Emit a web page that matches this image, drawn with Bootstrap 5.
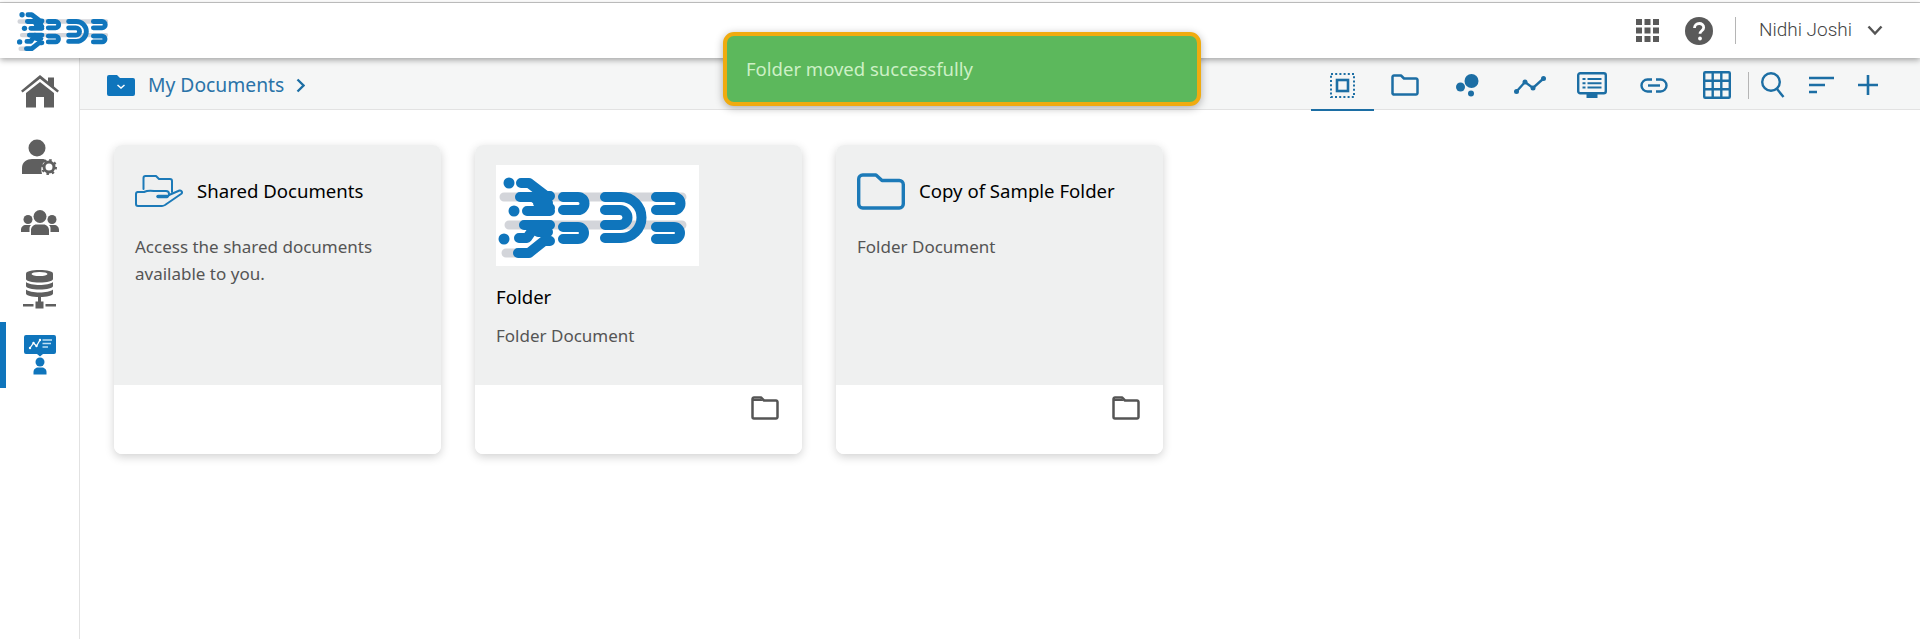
<!DOCTYPE html>
<html lang="en">
<head>
  <meta charset="UTF-8">
  <meta name="viewport" content="width=device-width, initial-scale=1.0">
  <title>My Documents</title>
  <link href="https://cdn.jsdelivr.net/npm/bootstrap@5.3.3/dist/css/bootstrap.min.css" rel="stylesheet">
  <style>
    body {
      font-family: "Noto Sans", "Lato", sans-serif;
      color: #555;
      background: #fff;
      overflow: hidden;
    }
    .top-line {
      height: 1px;
      margin-top: 2px;
      background: #c9c9c9;
    }
    .top-bar {
      height: 55px;
      padding: 0 37px 0 15px;
      background: #fff;
      box-shadow: 0 2px 6px rgba(0, 0, 0, .35);
      position: relative;
      z-index: 2;
    }
    .help-icon { margin-left: 26px; }
    .sep-v {
      width: 1px;
      height: 27px;
      background: #b5b5b5;
      margin: 0 23px 0 22px;
    }
    .user-name {
      font-family: "Roboto", sans-serif;
      font-weight: 300;
      font-size: 19px;
      color: #444;
    }
    .user-caret { margin-left: 15px; }
    .page-body { height: 581px; }
    .side-nav {
      width: 80px;
      border-right: 1px solid #e2e2e2;
      flex-shrink: 0;
    }
    .side-item {
      height: 66px;
      display: flex;
      align-items: center;
      justify-content: center;
      position: relative;
    }
    .side-item.is-active::before {
      content: "";
      position: absolute;
      left: 0;
      top: 0;
      bottom: 0;
      width: 6px;
      background: #0f75bc;
    }
    .crumb-bar {
      height: 52px;
      background: #f5f6f6;
      border-bottom: 1px solid #e2e2e2;
      padding: 3px 42px 0 27px;
    }
    .crumb-text {
      font-size: 19.300px;
      color: #2a73a8;
      margin: 0 12px 0 13px;
    }
    .tool-btn {
      width: 62.4px;
      height: 48px;
      display: flex;
      align-items: center;
      justify-content: center;
      position: relative;
    }
    .tool-btn.is-active::after {
      content: "";
      position: absolute;
      left: 0;
      right: 0;
      bottom: -2px;
      height: 2px;
      background: #1c6ea4;
    }
    .tool-sep {
      width: 1px;
      height: 27px;
      background: #b5b5b5;
      margin-right: 12px;
    }
    .tool-end { margin-left: 24px; }
    .cards-row {
      padding: 35px 0 0 34px;
      gap: 34px;
    }
    .doc-card {
      width: 327px;
      height: 309px;
      border: 0;
      border-radius: 8px;
      box-shadow: 0 3px 10px rgba(0, 0, 0, .18);
      overflow: hidden;
    }
    .doc-top {
      height: 240px;
      background: #eff0f0;
      padding: 20px 21px;
    }
    .doc-foot {
      height: 69px;
      background: #fff;
      padding: 11px 23px 0 0;
      display: flex;
      justify-content: flex-end;
      align-items: flex-start;
      color: #555;
    }
    .doc-head {
      height: 52px;
      gap: 14px;
    }
    .doc-title {
      font-size: 18.600px;
      font-weight: 400;
      color: #000;
    }
    .doc-desc {
      font-size: 17px;
      line-height: 27px;
      color: #555;
      margin-top: 16px;
    }
    .logo-box {
      width: 203px;
      height: 101px;
      background: #fff;
      display: block;
    }
    .logo-title { margin-top: 17px; }
    .logo-desc { margin-top: 11px; }
    .toast-box {
      position: absolute;
      left: 723px;
      top: 32px;
      width: 478px;
      height: 74px;
      background: #5cb85c;
      border: 4px solid #f0ab0f;
      border-radius: 11px;
      box-shadow: 0 2px 8px rgba(0, 0, 0, .3);
      color: #cdf0c6;
      font-size: 18.500px;
      padding-left: 19px;
      z-index: 5;
    }
  </style>
</head>
<body>
  <svg width="0" height="0" class="position-absolute">
    <symbol id="bdb-logo" viewBox="0 0 203 101">
      <g fill="none" stroke="#d3d5da" stroke-width="9" stroke-linecap="round">
        <path d="M8 32H186M13 60H186M10 88H30"/>
      </g>
      <g fill="none" stroke="#0f75bc" stroke-width="10" stroke-linecap="round" stroke-linejoin="round">
        <path d="M25 18H33L50 31H54"/>
        <path d="M24 32H37L52 43H54M31 46H54M42 38H52"/>
        <path d="M54 60H28M40 60L31 73H23M42 67H52"/>
        <path d="M22 88H33L48 76H54"/>
        <path d="M67 32H82a6.500 6.500 0 0 1 0 13H67M67 62H82a6 6 0 0 1 0 12H67"/>
        <path d="M109 32H125a20.500 20.500 0 0 1 0 41H109M109 45H124a7.500 7.500 0 0 1 0 15H109"/>
        <path d="M160 32H178a6.500 6.500 0 0 1 0 13H160M160 62H178a6 6 0 0 1 0 12H160"/>
      </g>
      <g fill="#0f75bc">
        <circle cx="13" cy="18" r="5.500"/>
        <circle cx="18" cy="46" r="5.500"/>
        <circle cx="8" cy="74" r="5.500"/>
      </g>
    </symbol>
    <symbol id="folder-line" viewBox="0 0 28 24">
      <path d="M1.500 21V3a1.500 1.500 0 0 1 1.500-1.500H10l3 3H25a1.500 1.500 0 0 1 1.500 1.500V21a1.500 1.500 0 0 1-1.500 1.500H3A1.500 1.500 0 0 1 1.500 21Z" fill="none" stroke="currentColor" stroke-width="2.500" stroke-linejoin="round"/>
      <path d="M1.500 3H10l2 2H1.500Z" fill="currentColor"/>
    </symbol>
  </svg>

  <div class="top-line"></div>
  <nav class="top-bar d-flex align-items-center justify-content-between">
    <svg width="100" height="49"><use href="#bdb-logo"/></svg>
    <div class="d-flex align-items-center">
      <svg width="23" height="23" viewBox="0 0 23 23" fill="#5a5a5a">
        <path d="M0 0h6v6H0zM8.500 0h6v6h-6zM17 0h6v6h-6zM0 8.500h6v6H0zM8.500 8.500h6v6h-6zM17 8.500h6v6h-6zM0 17h6v6H0zM8.500 17h6v6h-6zM17 17h6v6h-6z"/>
      </svg>
      <svg class="help-icon" width="28" height="28" viewBox="0 0 28 28">
        <circle cx="14" cy="14" r="14" fill="#5a5a5a"/>
        <path d="M9.500 11c0-2.800 2-4.500 4.700-4.500 2.600 0 4.500 1.600 4.500 3.900 0 3.300-3.700 3.300-3.700 6.400" fill="none" stroke="#fff" stroke-width="2.800"/>
        <circle cx="15" cy="21.500" r="1.900" fill="#fff"/>
      </svg>
      <span class="sep-v"></span>
      <span class="user-name">Nidhi Joshi</span>
      <svg class="user-caret" width="16" height="11" viewBox="0 0 16 11"><path d="M1.500 1.500 8 8.500l6.500-7" fill="none" stroke="#555" stroke-width="2.500"/></svg>
    </div>
  </nav>

  <div class="d-flex page-body">
    <aside class="side-nav">
      <div class="side-item">
        <svg width="38" height="33" viewBox="0 0 38 33" fill="#5f5f5f">
          <path d="M19 0 27 6.500V2.500h6V11.500l5 4.200-1.600 1.900L19 3.800 1.600 17.600 0 15.700Z"/>
          <path d="M19 7 33 18V32.500H23V22H15V32.500H5V18Z"/>
        </svg>
      </div>
      <div class="side-item">
        <svg width="36" height="36" viewBox="0 0 36 36" fill="#5f5f5f">
          <circle cx="15" cy="9" r="8.500"/>
          <path d="M0 35V29c0-6 5-9 10-9h10c2 0 3.500.5 5 1.500-4 1-7 6-5 13.500Z"/>
          <circle cx="27" cy="28" r="5" fill="none" stroke="#5f5f5f" stroke-width="3"/>
          <circle cx="27" cy="28" r="7" fill="none" stroke="#5f5f5f" stroke-width="2" stroke-dasharray="2.500 3"/>
        </svg>
      </div>
      <div class="side-item">
        <svg width="38" height="26" viewBox="0 0 38 26" fill="#5f5f5f">
          <circle cx="19" cy="6.500" r="6.500"/>
          <circle cx="7" cy="9.500" r="4.500"/>
          <circle cx="31" cy="9.500" r="4.500"/>
          <path d="M0 22v-2c0-3 2-5 5-5h5c-1 1-1.500 2-1.500 3.500V22ZM38 22v-2c0-3-2-5-5-5h-5c1 1 1.500 2 1.500 3.500V22ZM10 25v-5c0-3 2.500-5.500 5.500-5.500h7c3 0 5.500 2.500 5.500 5.500v5Z"/>
        </svg>
      </div>
      <div class="side-item">
        <svg width="34" height="39" viewBox="0 0 34 39" fill="#5f5f5f">
          <path d="M3 3.500C3 1.500 9 0 16.500 0S30 1.500 30 3.500V9c0 2-6 3.500-13.500 3.500S3 11 3 9Z"/>
          <ellipse cx="16.500" cy="4" rx="8" ry="2" fill="#fff"/>
          <path d="M3 12c2 2 8 3 13.500 3S28 14 30 12v4c0 2-6 3.500-13.500 3.500S3 18 3 16ZM3 19.500c2 2 8 3 13.500 3s11.500-1 13.500-3v4c0 2-6 3.500-13.500 3.500S3 25.500 3 23.500Z"/>
          <path d="M15 27h3v5h-3ZM12.500 31.500h8v7h-8ZM0 34h10.500v2.500H0ZM22.500 34H33v2.500H22.500Z"/>
        </svg>
      </div>
      <div class="side-item is-active">
        <svg width="32" height="40" viewBox="0 0 32 40">
          <path d="M2 0h28a2 2 0 0 1 2 2v15a2 2 0 0 1-2 2H19l-3 2.500L13 19H2a2 2 0 0 1-2-2V2a2 2 0 0 1 2-2Z" fill="#0f75bc"/>
          <path d="M6 13l3.500-5 3 3 3.500-6" fill="none" stroke="#fff" stroke-width="1.300"/>
          <g fill="#fff"><circle cx="6" cy="13" r="1.200"/><circle cx="9.500" cy="8" r="1.200"/><circle cx="12.500" cy="11" r="1.200"/><circle cx="16" cy="5" r="1.200"/></g>
          <path d="M18.500 5H28M18.500 8.500H27M18.500 12H24" fill="none" stroke="#bfe0f5" stroke-width="1.300"/>
          <circle cx="16" cy="27" r="4.500" fill="#0f75bc"/>
          <path d="M9.500 39.500v-2.500c0-3 2.500-4.500 4.500-4.500h4c2 0 4.500 1.500 4.500 4.500v2.500Z" fill="#0f75bc"/>
        </svg>
      </div>
    </aside>

    <main class="flex-grow-1">
      <div class="crumb-bar d-flex align-items-center justify-content-between">
        <div class="d-flex align-items-center">
          <svg width="28" height="21" viewBox="0 0 28 21">
            <path d="M2 0h8l3 3h13a2 2 0 0 1 2 2v14a2 2 0 0 1-2 2H2a2 2 0 0 1-2-2V2a2 2 0 0 1 2-2Z" fill="#0f75bc"/>
            <path d="M10.500 10 14 13l3.500-3" fill="none" stroke="#fff" stroke-width="1.500"/>
          </svg>
          <span class="crumb-text">My Documents</span>
          <svg width="9" height="15" viewBox="0 0 9 15"><path d="M1.500 1.500 7.500 7.500l-6 6" fill="none" stroke="#1c6ea4" stroke-width="2.300"/></svg>
        </div>
        <div class="d-flex align-items-center">
          <div class="tool-btn is-active">
            <svg width="25" height="25" viewBox="0 0 25 25" fill="none" stroke="#1c6ea4">
              <rect x="1" y="1" width="23" height="23" stroke-width="2" stroke-dasharray="2 2.200"/>
              <rect x="7" y="7" width="11" height="11" stroke-width="2.600"/>
            </svg>
          </div>
          <div class="tool-btn">
            <svg width="28" height="22" viewBox="0 0 28 22" fill="none" stroke="#1c6ea4" stroke-width="2.500" stroke-linejoin="round">
              <path d="M1.500 19.500V3a1.500 1.500 0 0 1 1.500-1.500H10l3 3H25a1.500 1.500 0 0 1 1.500 1.500V19A1.500 1.500 0 0 1 25 20.500H2.500Z"/>
            </svg>
          </div>
          <div class="tool-btn">
            <svg width="23" height="23" viewBox="0 0 23 23" fill="#1c6ea4">
              <ellipse cx="15.500" cy="7" rx="7" ry="7"/>
              <circle cx="4.500" cy="13" r="4.500"/>
              <circle cx="15" cy="19.500" r="3"/>
            </svg>
          </div>
          <div class="tool-btn">
            <svg width="32" height="18" viewBox="0 0 32 18">
              <path d="M2.500 15.500 11 6l8 6L29.500 2.500" fill="none" stroke="#1c6ea4" stroke-width="2.400"/>
              <g fill="#1c6ea4"><circle cx="2.500" cy="15.500" r="2.500"/><circle cx="11" cy="6" r="2.500"/><circle cx="19" cy="12" r="2.500"/><circle cx="29.500" cy="2.500" r="2.500"/></g>
            </svg>
          </div>
          <div class="tool-btn">
            <svg width="30" height="27" viewBox="0 0 30 27" fill="none" stroke="#1c6ea4">
              <rect x="1.200" y="1.200" width="27.600" height="20" rx="2" stroke-width="2.400"/>
              <path d="M5.500 7H8.500M10.500 7H24.500M5.500 11.200H8.500M10.500 11.200H24.500M5.500 15.400H8.500M10.500 15.400H24.500" stroke-width="2"/>
              <path d="M9.500 22h11v4h-11Z" fill="#1c6ea4" stroke="none"/>
            </svg>
          </div>
          <div class="tool-btn">
            <svg width="28" height="15" viewBox="0 0 28 15" fill="none" stroke="#1c6ea4" stroke-width="2.400">
              <path d="M12 1.500H7.500a6 6 0 0 0 0 12H12M16 1.500h4.500a6 6 0 0 1 0 12H16"/>
              <path d="M8 7.500H20"/>
            </svg>
          </div>
          <div class="tool-btn">
            <svg width="28" height="28" viewBox="0 0 28 28" fill="none" stroke="#1c6ea4" stroke-width="2.400">
              <rect x="1.200" y="1.200" width="25.600" height="25.600" rx="1"/>
              <path d="M9.700 1V27M18.300 1V27M1 9.700H27M1 18.300H27"/>
            </svg>
          </div>
          <span class="tool-sep"></span>
          <svg width="24" height="26" viewBox="0 0 24 26" fill="none" stroke="#1c6ea4" stroke-width="2.400">
            <ellipse cx="10" cy="10" rx="8.800" ry="8.800"/>
            <path d="M16 17 22.500 25"/>
          </svg>
          <svg class="tool-end" width="25" height="18" viewBox="0 0 25 18" fill="none" stroke="#1c6ea4" stroke-width="2.600">
            <path d="M0 2H25M0 9H16M0 16H8"/>
          </svg>
          <svg class="tool-end" width="20" height="20" viewBox="0 0 20 20" fill="none" stroke="#1c6ea4" stroke-width="2.600">
            <path d="M0 10H20M10 0V20"/>
          </svg>
        </div>
      </div>

      <div class="cards-row d-flex">
        <div class="card doc-card">
          <div class="doc-top">
            <div class="doc-head d-flex align-items-center">
              <svg width="48" height="32" viewBox="0 0 48 32" fill="none" stroke="#1c7ab8" stroke-width="2" stroke-linejoin="round" stroke-linecap="round">
                <path d="M8.500 14V3a2 2 0 0 1 2-2H21l3 3h11a2 2 0 0 1 2 2v11"/>
                <path d="M3 17H9c3-1.500 7-1.500 10-1h12a3 3 0 0 1 3 3c0 1.500-1 2.500-3 2.500"/>
                <path d="M3 17a2 2 0 0 0-2 2V29a2 2 0 0 0 2 2H27c1 0 2-.4 3-1L46 19c2-1.500 .5-4-1.500-3.500L34 20"/>
                <path d="M23 21.500H32" stroke-width="3.500"/>
              </svg>
              <span class="doc-title">Shared Documents</span>
            </div>
            <div class="doc-desc">Access the shared documents<br>available to you.</div>
          </div>
          <div class="doc-foot"></div>
        </div>

        <div class="card doc-card">
          <div class="doc-top">
            <svg class="logo-box"><use href="#bdb-logo"/></svg>
            <div class="doc-title logo-title">Folder</div>
            <div class="doc-desc logo-desc">Folder Document</div>
          </div>
          <div class="doc-foot"><svg width="28" height="24"><use href="#folder-line"/></svg></div>
        </div>

        <div class="card doc-card">
          <div class="doc-top">
            <div class="doc-head d-flex align-items-center">
              <svg width="48" height="37" viewBox="0 0 48 37" fill="none" stroke="#1c7ab8" stroke-width="3.400" stroke-linejoin="round">
                <path d="M1.700 31V6a4 4 0 0 1 4-4H19l6 5.500H42a4 4 0 0 1 4.300 4V31a4 4 0 0 1-4 4H5.700a4 4 0 0 1-4-4Z"/>
              </svg>
              <span class="doc-title">Copy of Sample Folder</span>
            </div>
            <div class="doc-desc">Folder Document</div>
          </div>
          <div class="doc-foot"><svg width="28" height="24"><use href="#folder-line"/></svg></div>
        </div>
      </div>
    </main>
  </div>

  <div class="toast-box d-flex align-items-center">Folder moved successfully</div>

  <script src="https://cdn.jsdelivr.net/npm/bootstrap@5.3.3/dist/js/bootstrap.bundle.min.js"></script>
</body>
</html>
